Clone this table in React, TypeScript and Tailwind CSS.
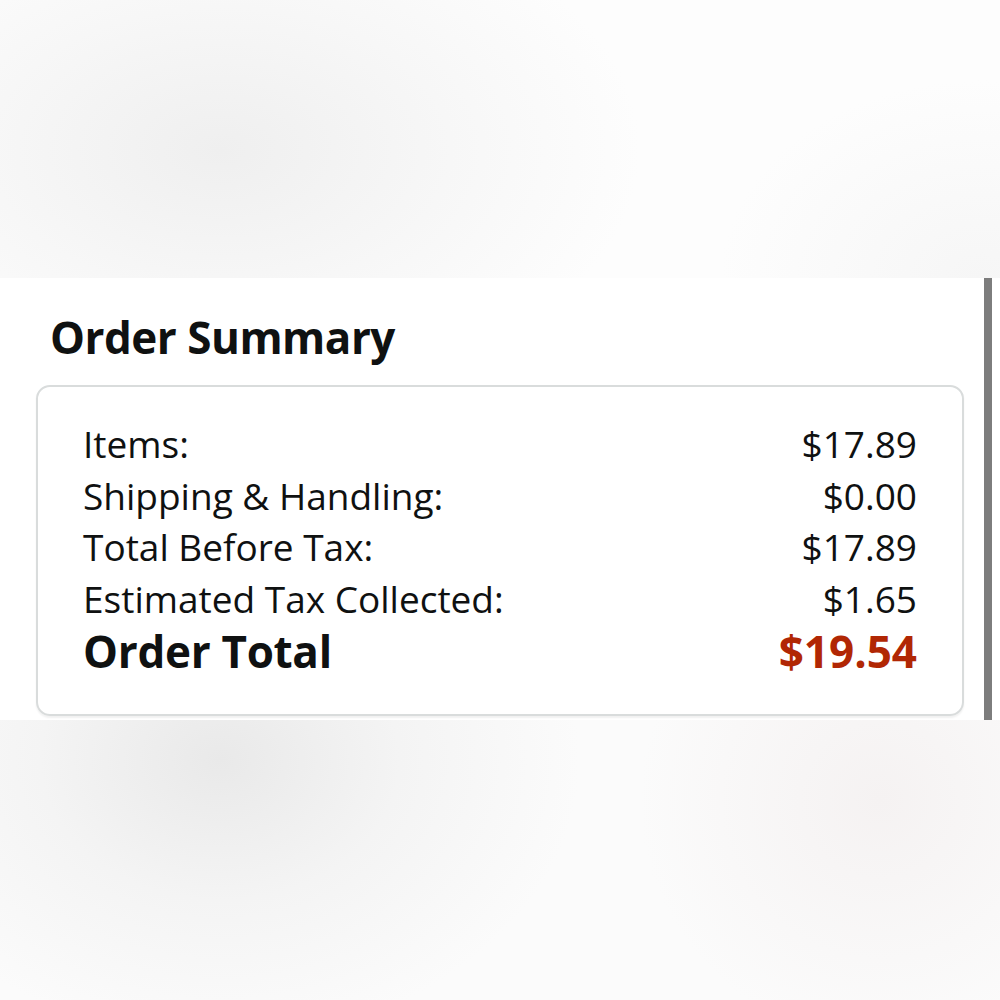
const rows = [
  { label: "Items:", value: "$17.89" },
  { label: "Shipping & Handling:", value: "$0.00" },
  { label: "Total Before Tax:", value: "$17.89" },
  { label: "Estimated Tax Collected:", value: "$1.65" },
];

export default function App() {
  return (
    <div className="w-[1000px] h-[1000px] flex flex-col bg-white font-['Open_Sans','Liberation_Sans',sans-serif] text-[#0f1111]">
      {/* blurred photo background, top */}
      <div className="h-[278px] bg-[radial-gradient(ellipse_420px_260px_at_220px_150px,#efefef,#f7f7f7_55%,transparent_100%),radial-gradient(ellipse_260px_200px_at_980px_280px,#f6f6f6,transparent_100%)] bg-[#fdfdfd]" />

      <div className="h-[442px] flex bg-white">
        <div className="flex-1 pt-[30px] pl-[36px] pr-[20px]">
          <h2 className="pl-[14px] text-[44px] leading-[58px] font-bold tracking-[-0.5px]">
            Order Summary
          </h2>
          <div className="mt-[19px] h-[331px] rounded-[14px] border-2 border-[#d9dcdc] shadow-[0_2px_2px_rgba(0,0,0,0.06)] px-[45px] pt-[31px]">
            {rows.map((r) => (
              <div key={r.label} className="flex justify-between text-[37px] leading-[51.5px]">
                <span>{r.label}</span>
                <span>{r.value}</span>
              </div>
            ))}
            <div className="flex justify-between text-[44px] leading-[54px] font-bold">
              <span className="tracking-[-0.3px]">Order Total</span>
              <span className="text-[#b12704]">$19.54</span>
            </div>
          </div>
        </div>
        <div className="w-[8px] bg-[#7d7d7d]" />
        <div className="w-[8px]" />
      </div>

      {/* blurred photo background, bottom */}
      <div className="flex-1 bg-[radial-gradient(ellipse_360px_280px_at_220px_40px,#e9e9e9,#f4f4f4_50%,transparent_100%),radial-gradient(ellipse_240px_240px_at_880px_80px,#f5f2f2,transparent_100%)] bg-[#fbfbfb]" />
    </div>
  );
}
